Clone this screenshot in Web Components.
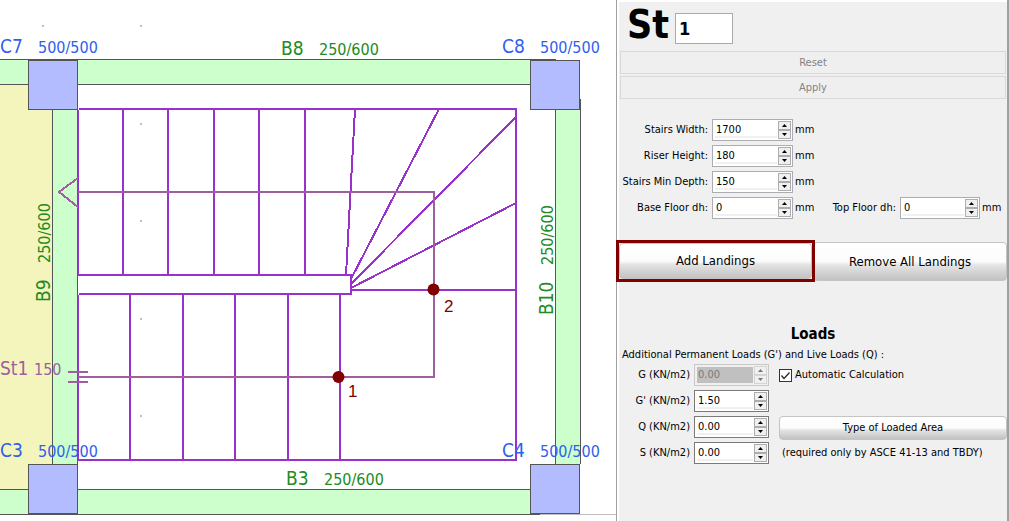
<!DOCTYPE html>
<html lang="en">
<head>
<meta charset="utf-8">
<title>Stairs properties</title>
<style>
  html, body { margin: 0; height: 100%; }
  body {
    --ui-font: "DejaVu Sans Condensed", "DejaVu Sans", sans-serif;
    font-family: "DejaVu Sans Condensed", "DejaVu Sans", sans-serif;
    color: #000;
    background: #fff;
  }
</style>
</head>
<body>
<stairs-app></stairs-app>

<script>
class BaseElement extends HTMLElement {
  constructor() {
    super();
    this.attachShadow({ mode: "open" });
  }
  connectedCallback() {
    if (!this.shadowRoot.firstChild) this.shadowRoot.innerHTML = this.render();
  }
}

/* Plan drawing: beams, columns, the stair flights and their labels. */
class PlanView extends BaseElement {
  column(x, y) {
    return `<rect class="column" x="${x}" y="${y}" width="49" height="49"/>`;
  }
  tag(x, y, name, size, cls, gap, turn = "") {
    return `<g class="${cls}" transform="translate(${x} ${y}) ${turn}"><text class="name">${name}</text><text class="size" x="${gap}">${size}</text></g>`;
  }
  render() {
    const dots = [[42, 25], [140, 25], [140, 123], [140, 220], [140, 318], [140, 415]];
    return `
    <style>
      :host { display: block; overflow: hidden; background: #fff; }
      svg { display: block; width: 100%; height: 100%; font-family: var(--ui-font); }
      .lines { shape-rendering: crispEdges; }
      .beam { fill: #ccffcc; }
      .slab { fill: #f3f5bc; }
      .edge { fill: none; stroke: #555; stroke-width: 1; }
      .column { fill: #b3bcff; stroke: #555; stroke-width: 1; }
      .step { fill: none; stroke: #9932cc; stroke-width: 2; }
      .route { fill: none; stroke: #9f5f9f; stroke-width: 2; }
      .grid { fill: #c0c0c0; }
      .node { fill: #800000; }
      .c { fill: #2f5fee; }
      .b { fill: #228b22; }
      .st { fill: #9f5f9f; }
      .name { font-size: 19px; }
      .size { font-size: 16px; }
      .mark { font: 17px "Liberation Sans", sans-serif; fill: #800000; }
    </style>
    <svg role="img" aria-label="Stair plan">
      <g class="lines">
        <rect class="slab" x="0" y="85" width="52" height="404"/>
        <rect class="beam" x="0" y="60" width="555" height="24"/>
        <rect class="beam" x="53" y="85" width="24" height="404"/>
        <rect class="beam" x="0" y="490" width="540" height="24"/>
        <rect class="beam" x="556" y="99" width="24" height="366"/>
        <path class="edge" d="M0 59.5H556M0 84.5H530M52.5 110V464M77.5 110V464M0 489.5H530M0 514.5H540M555.5 110V464M580.5 99V464"/>
        <path stroke="#c0c0c0" d="M540 514.5H2000"/>
        ${this.column(28.5, 60.5)}${this.column(530.5, 60.5)}${this.column(28.5, 464.5)}${this.column(530.5, 464.5)}
        <g class="grid">${dots.map(([x, y]) => `<rect x="${x}" y="${y}" width="2" height="2"/>`).join("")}</g>
        <path class="step" d="M78 110V275M79 109H516M516 108V461M78 275H351M351 274V295M79 294H352M78 295V461M78 460H517M351 290H516
          M123 109V275M168 109V275M214 109V275M259 109V275M305 109V275M355 109L346 275
          M130 294V460M183 294V460M235 294V460M288 294V460M340 294V460
          M439 109L351 279M516 117L351 284M516 203L351 288"/>
        <path class="route" d="M78 178L59 192L78 207M78 192H434V377H78M68 372H88M68 382H88"/>
      </g>
      <circle class="node" cx="338.500" cy="377" r="6"/>
      <circle class="node" cx="433.500" cy="289.500" r="6"/>
      <text class="mark" x="348" y="397">1</text>
      <text class="mark" x="444" y="312">2</text>
      ${this.tag(0, 53, "C7", "500/500", "c", 38)}
      ${this.tag(502, 53, "C8", "500/500", "c", 38)}
      ${this.tag(0, 457, "C3", "500/500", "c", 38)}
      ${this.tag(502, 457, "C4", "500/500", "c", 38)}
      ${this.tag(281, 55, "B8", "250/600", "b", 38)}
      ${this.tag(286, 485, "B3", "250/600", "b", 38)}
      ${this.tag(50, 302, "B9", "250/600", "b", 39, "rotate(-90)")}
      ${this.tag(553, 315, "B10", "250/600", "b", 50, "rotate(-90)")}
      ${this.tag(0, 375, "St1", "150", "st", 34)}
    </svg>`;
  }
}
customElements.define("plan-view", PlanView);

/* Labelled number box with up and down buttons. */
class SpinField extends BaseElement {
  render() {
    const off = this.hasAttribute("disabled") ? "disabled" : "";
    const unit = this.getAttribute("unit");
    return `
    <style>
      :host { display: flex; align-items: center; font: 11px/22px var(--ui-font); white-space: nowrap; }
      label { flex: none; width: var(--label-width); margin-right: 4px; text-align: right; }
      .box { box-sizing: border-box; display: flex; flex: none; width: var(--box-width); height: 22px; padding: 1px; gap: 1px;
             border: 1px solid var(--box-border, #abadb3); background: #fff; }
      input { flex: 1; min-width: 0; padding: 0 0 0 1px; border: 1px solid #fff; border-right: 0; margin: 0; outline: 0;
              background: linear-gradient(#fff 14px, #f0f0f0 14px); font: 11px/16px var(--ui-font); color: #000; }
      .arrows { display: flex; flex-direction: column; width: 13px; }
      button { flex: 1; display: grid; place-items: center; min-height: 0; padding: 0; border: 1px solid #adadad; background: #f0f0f0; }
      svg { display: block; width: 5px; height: 3px; }
      .off { border-color: #c8c8c8; background: #f0f0f0; }
      .off input { background: #c0c0c0; color: #7a7a7a; border-color: #f0f0f0; }
      .off button { border-color: #d4d4d4; }
      .off svg { opacity: .5; }
      span { margin-left: 2px; }
    </style>
    <label for="v">${this.getAttribute("label")}</label>
    <div class="box ${off && "off"}">
      <input id="v" type="text" value="${this.getAttribute("value")}" ${off}>
      <div class="arrows">
        <button type="button" aria-label="Increase" ${off}><svg viewBox="0 0 5 3"><path d="M0 3L2.500 0L5 3Z"/></svg></button>
        <button type="button" aria-label="Decrease" ${off}><svg viewBox="0 0 5 3"><path d="M0 0L2.500 3L5 0Z"/></svg></button>
      </div>
    </div>
    ${unit ? `<span>${unit}</span>` : ""}`;
  }
}
customElements.define("spin-field", SpinField);

/* Push button: glossy by default, or flat when it is disabled. */
class PushButton extends BaseElement {
  render() {
    return `
    <style>
      :host { display: flex; }
      button { flex: 1; box-sizing: border-box; padding: 0; border: 1px solid #c4c4c4; border-radius: 4px; color: #000;
               background: linear-gradient(#fff 0%, #fcfcfc 50%, #e4e4e4 60%, #c2c2c2 100%); font: 13px/16px var(--ui-font); }
      :host([small]) button { font-size: 11px; }
      button:disabled { border: 1px solid #d9d9d9; border-radius: 0; background: #efefef; color: #838383; font-size: 11px; }
    </style>
    <button type="button" ${this.hasAttribute("disabled") ? "disabled" : ""}><slot></slot></button>`;
  }
}
customElements.define("push-button", PushButton);

class CheckField extends BaseElement {
  render() {
    return `
    <style>
      :host { display: flex; align-items: center; font: 11px/22px var(--ui-font); }
      .tick { display: grid; margin-right: 3px; }
      input, svg { grid-area: 1 / 1; box-sizing: border-box; width: 13px; height: 13px; margin: 0; }
      input { appearance: none; border: 1px solid #333; background: #fff; }
      svg { pointer-events: none; fill: none; stroke: #222; stroke-width: 1.200; }
      input:not(:checked) + svg { visibility: hidden; }
    </style>
    <div class="tick"><input id="c" type="checkbox" checked><svg viewBox="0 0 13 13"><path d="M2.500 6.500L5 9.500L10.500 3.500"/></svg></div>
    <label for="c"><slot></slot></label>`;
  }
}
customElements.define("check-field", CheckField);

class StairsPanel extends BaseElement {
  render() {
    return `
    <style>
      :host { box-sizing: border-box; display: flex; flex-direction: column; background: #f0f0f0; font: 11px/16px var(--ui-font);
              border-left: 1px solid #a0a0a0; border-right: 2px solid #a0a0a0; }
      .body { flex: 1; border-left: 2px solid #fff; border-top: 2px solid #fff; }
      header { display: flex; align-items: flex-start; height: 49px; padding-left: 8px; gap: 6px; }
      header label { font: bold 39px/46px var(--ui-font); }
      header input { box-sizing: border-box; width: 58px; height: 31px; padding: 0 3px; border: 1px solid #aaa; background: #fff;
                     font: bold 18px/24px var(--ui-font); margin-top: 11px; }
      .actions { display: grid; gap: 2px; margin: 0 1px; }
      .actions push-button { height: 23px; }
      .dims { display: grid; grid-template-columns: 193px 1fr; row-gap: 4px; margin-top: 20px; --label-width: 89px; --box-width: 81px; }
      .dims spin-field { grid-column: 1; }
      .dims .side { grid-column: 2; --label-width: 84px; --box-width: 80px; }
      .landings { display: grid; grid-template-columns: 1fr 1fr; margin-top: 21px; height: 42px; }
      .landings push-button { margin: 2px 0 1px; }
      .landings .marked { margin: 0 -2px 0 -3px; border: 3px solid #800000; z-index: 1; }
      h2 { margin: 41px 0 0; font: bold 15px/22px var(--ui-font); text-align: center; }
      p { margin: 2px 0 0 3px; white-space: nowrap; }
      .loads { display: grid; grid-template-columns: 160px 1fr; row-gap: 4px; margin-top: 1px; align-items: center;
               --label-width: 71px; --box-width: 75px; --box-border: #7a7a7a; }
      .loads push-button { height: 24px; margin-bottom: -2px; }
      .loads span { padding-left: 3px; white-space: nowrap; }
      .loads spin-field { grid-column: 1; }
    </style>
    <div class="body">
      <header><label for="n">St</label><input id="n" type="text" value="1"></header>
      <div class="actions"><push-button disabled>Reset</push-button><push-button disabled>Apply</push-button></div>
      <div class="dims">
        <spin-field label="Stairs Width:" value="1700" unit="mm"></spin-field>
        <spin-field label="Riser Height:" value="180" unit="mm"></spin-field>
        <spin-field label="Stairs Min Depth:" value="150" unit="mm"></spin-field>
        <spin-field label="Base Floor dh:" value="0" unit="mm"></spin-field>
        <spin-field class="side" label="Top Floor dh:" value="0" unit="mm"></spin-field>
      </div>
      <div class="landings"><push-button class="marked">Add Landings</push-button><push-button>Remove All Landings</push-button></div>
      <h2>Loads</h2>
      <p>Additional Permanent Loads (G') and Live Loads (Q) :</p>
      <div class="loads">
        <spin-field label="G (KN/m2)" value="0.00" disabled></spin-field><check-field>Automatic Calculation</check-field>
        <spin-field label="G' (KN/m2)" value="1.50"></spin-field>
        <spin-field label="Q (KN/m2)" value="0.00"></spin-field><push-button small>Type of Loaded Area</push-button>
        <spin-field label="S (KN/m2)" value="0.00"></spin-field><span>(required only by ASCE 41-13 and TBDY)</span>
      </div>
    </div>`;
  }
}
customElements.define("stairs-panel", StairsPanel);

class StairsApp extends BaseElement {
  render() {
    return `
    <style>
      :host { display: flex; min-height: 100vh; }
      plan-view { flex: 1; min-width: 0; }
      stairs-panel { flex: none; width: 393px; }
    </style>
    <plan-view></plan-view><stairs-panel></stairs-panel>`;
  }
}
customElements.define("stairs-app", StairsApp);
</script>
</body>
</html>
